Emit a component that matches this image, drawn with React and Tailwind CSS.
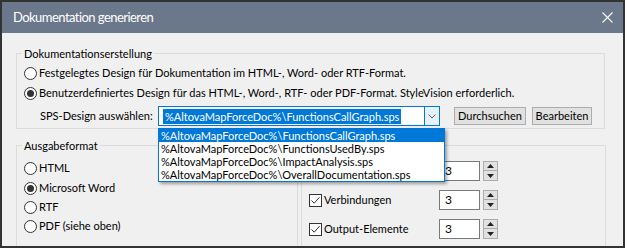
import React from "react";

const F = { fontFamily: 'Lato, "Noto Sans", sans-serif' };

function Radio({ checked }) {
  return (
    <span className="w-[13px] h-[13px] rounded-full border border-[#333333] bg-white flex items-center justify-center shrink-0">
      {checked && <span className="w-[7px] h-[7px] rounded-full bg-[#333333]" />}
    </span>
  );
}

function Check() {
  return (
    <span className="w-[13px] h-[13px] border border-[#333333] bg-white flex items-center justify-center shrink-0">
      <svg width="11" height="11" viewBox="0 0 11 11">
        <path d="M1.5 5.5 L4.2 8.2 L9.5 2.2" fill="none" stroke="#333333" strokeWidth="1" />
      </svg>
    </span>
  );
}

function Spin({ value }) {
  return (
    <div className="flex items-center gap-[3px]">
      <div className="w-[41px] h-[20px] bg-white border border-[#7a7a7a] flex items-center pl-[5px] text-[12px] text-black">{value}</div>
      <div className="w-[15px] h-[20px] flex flex-col">
        <div className="h-[10px] bg-[#e1e1e1] border border-[#adadad] flex items-center justify-center">
          <svg width="7" height="4" viewBox="0 0 7 4"><path d="M0 4 L3.5 0 L7 4 Z" fill="#222" /></svg>
        </div>
        <div className="h-[10px] bg-[#e1e1e1] border border-[#adadad] border-t-0 flex items-center justify-center">
          <svg width="7" height="4" viewBox="0 0 7 4"><path d="M0 0 L3.5 4 L7 0 Z" fill="#222" /></svg>
        </div>
      </div>
    </div>
  );
}

export default function App() {
  const items = [
    "%AltovaMapForceDoc%\\FunctionsCallGraph.sps",
    "%AltovaMapForceDoc%\\FunctionsUsedBy.sps",
    "%AltovaMapForceDoc%\\ImpactAnalysis.sps",
    "%AltovaMapForceDoc%\\OverallDocumentation.sps",
  ];
  return (
    <div className="w-[627px] h-[250px] bg-white" style={F}>
      <div className="w-[625px] h-[248px] border-2 border-[#333333] flex flex-col overflow-hidden">
        <div className="h-[31px] bg-[#6b778a] flex items-center justify-between pl-[11px] pr-[10px] shrink-0">
          <span className="text-white text-[13px] tracking-[-0.55px] leading-none">Dokumentation generieren</span>
          <svg width="11" height="11" viewBox="0 0 11 11">
            <path d="M0.5 0.5 L10.5 10.5 M10.5 0.5 L0.5 10.5" stroke="white" strokeWidth="1.1" />
          </svg>
        </div>
        <div className="flex-1 bg-[#f0f0f0] px-[14px] text-[11px] text-black whitespace-nowrap">
          <fieldset className="mt-[13px] w-[589px] border border-[#dcdcdc] px-[7px] pt-[2px] pb-[2px]">
            <legend className="ml-[-2px] px-[2px] leading-[15px]">Dokumentationserstellung</legend>
            <div className="h-[20px] flex items-center gap-[2px]">
              <Radio />
              <span>Festgelegtes Design für Dokumentation im HTML-, Word- oder RTF-Format.</span>
            </div>
            <div className="h-[20px] flex items-center gap-[2px]">
              <Radio checked />
              <span>Benutzerdefiniertes Design für das HTML-, Word-, RTF- oder PDF-Format. StyleVision erforderlich.</span>
            </div>
            <div className="mt-[3px] h-[20px] flex items-center">
              <span className="w-[134px] shrink-0 pl-[16px]">SPS-Design auswählen:</span>
              <div className="relative shrink-0">
                <div className="w-[282px] h-[20px] border border-[#0078d7] bg-white flex items-center">
                  <div className="flex-1 pl-[4px] flex items-center">
                    <span className="bg-[#0078d7] text-white h-[15px] leading-[15px] pl-[2px] pr-[2px]">{items[0]}</span>
                  </div>
                  <div className="w-[15px] h-[18px] border-l border-[#0078d7] bg-[#e5f1fb] flex items-center justify-center">
                    <svg width="8" height="5" viewBox="0 0 8 5"><path d="M0.5 0.5 L4 4 L7.5 0.5" fill="none" stroke="#606060" strokeWidth="1" /></svg>
                  </div>
                </div>
                <div className="absolute left-0 top-[22px] w-[287px] border border-[#0078d7] bg-white z-10 shadow-[2px_2px_3px_rgba(0,0,0,0.35)]">
                  {items.map((t, i) => (
                    <div key={t} className={"h-[13px] leading-[13px] pl-[2px] " + (i === 0 ? "bg-[#0078d7] text-white" : "text-black")}>{t}</div>
                  ))}
                </div>
              </div>
              <div className="ml-[14px] w-[72px] h-[18px] shrink-0 bg-[#e1e1e1] border border-[#adadad] flex items-center justify-center">Durchsuchen</div>
              <div className="ml-[6px] w-[60px] h-[18px] shrink-0 bg-[#e1e1e1] border border-[#adadad] flex items-center justify-center">Bearbeiten</div>
            </div>
          </fieldset>
          <div className="flex mt-[9px] gap-[3px]">
            <fieldset className="w-[282px] h-[140px] border border-[#dcdcdc] px-[7px] pt-[5px]">
              <legend className="ml-[-2px] px-[2px] leading-[15px]">Ausgabeformat</legend>
              <div className="h-[20px] flex items-center gap-[2px]"><Radio /><span>HTML</span></div>
              <div className="h-[20px] flex items-center gap-[2px]"><Radio checked /><span>Microsoft Word</span></div>
              <div className="h-[19px] flex items-center gap-[2px]"><Radio /><span>RTF</span></div>
              <div className="h-[19px] flex items-center gap-[2px]"><Radio /><span>PDF (siehe oben)</span></div>
            </fieldset>
            <fieldset className="w-[305px] h-[140px] border border-[#dcdcdc] px-[7px] pt-[8px] flex flex-col gap-[9px]">
              <legend className="ml-[-2px] px-[2px] leading-[15px]">Details</legend>
              {["Bibliotheken", "Verbindungen", "Output-Elemente"].map((t) => (
                <div key={t} className="h-[20px] flex items-center">
                  <div className="w-[130px] flex items-center gap-[2px]"><Check /><span>{t}</span></div>
                  <Spin value="3" />
                </div>
              ))}
            </fieldset>
          </div>
        </div>
      </div>
    </div>
  );
}
